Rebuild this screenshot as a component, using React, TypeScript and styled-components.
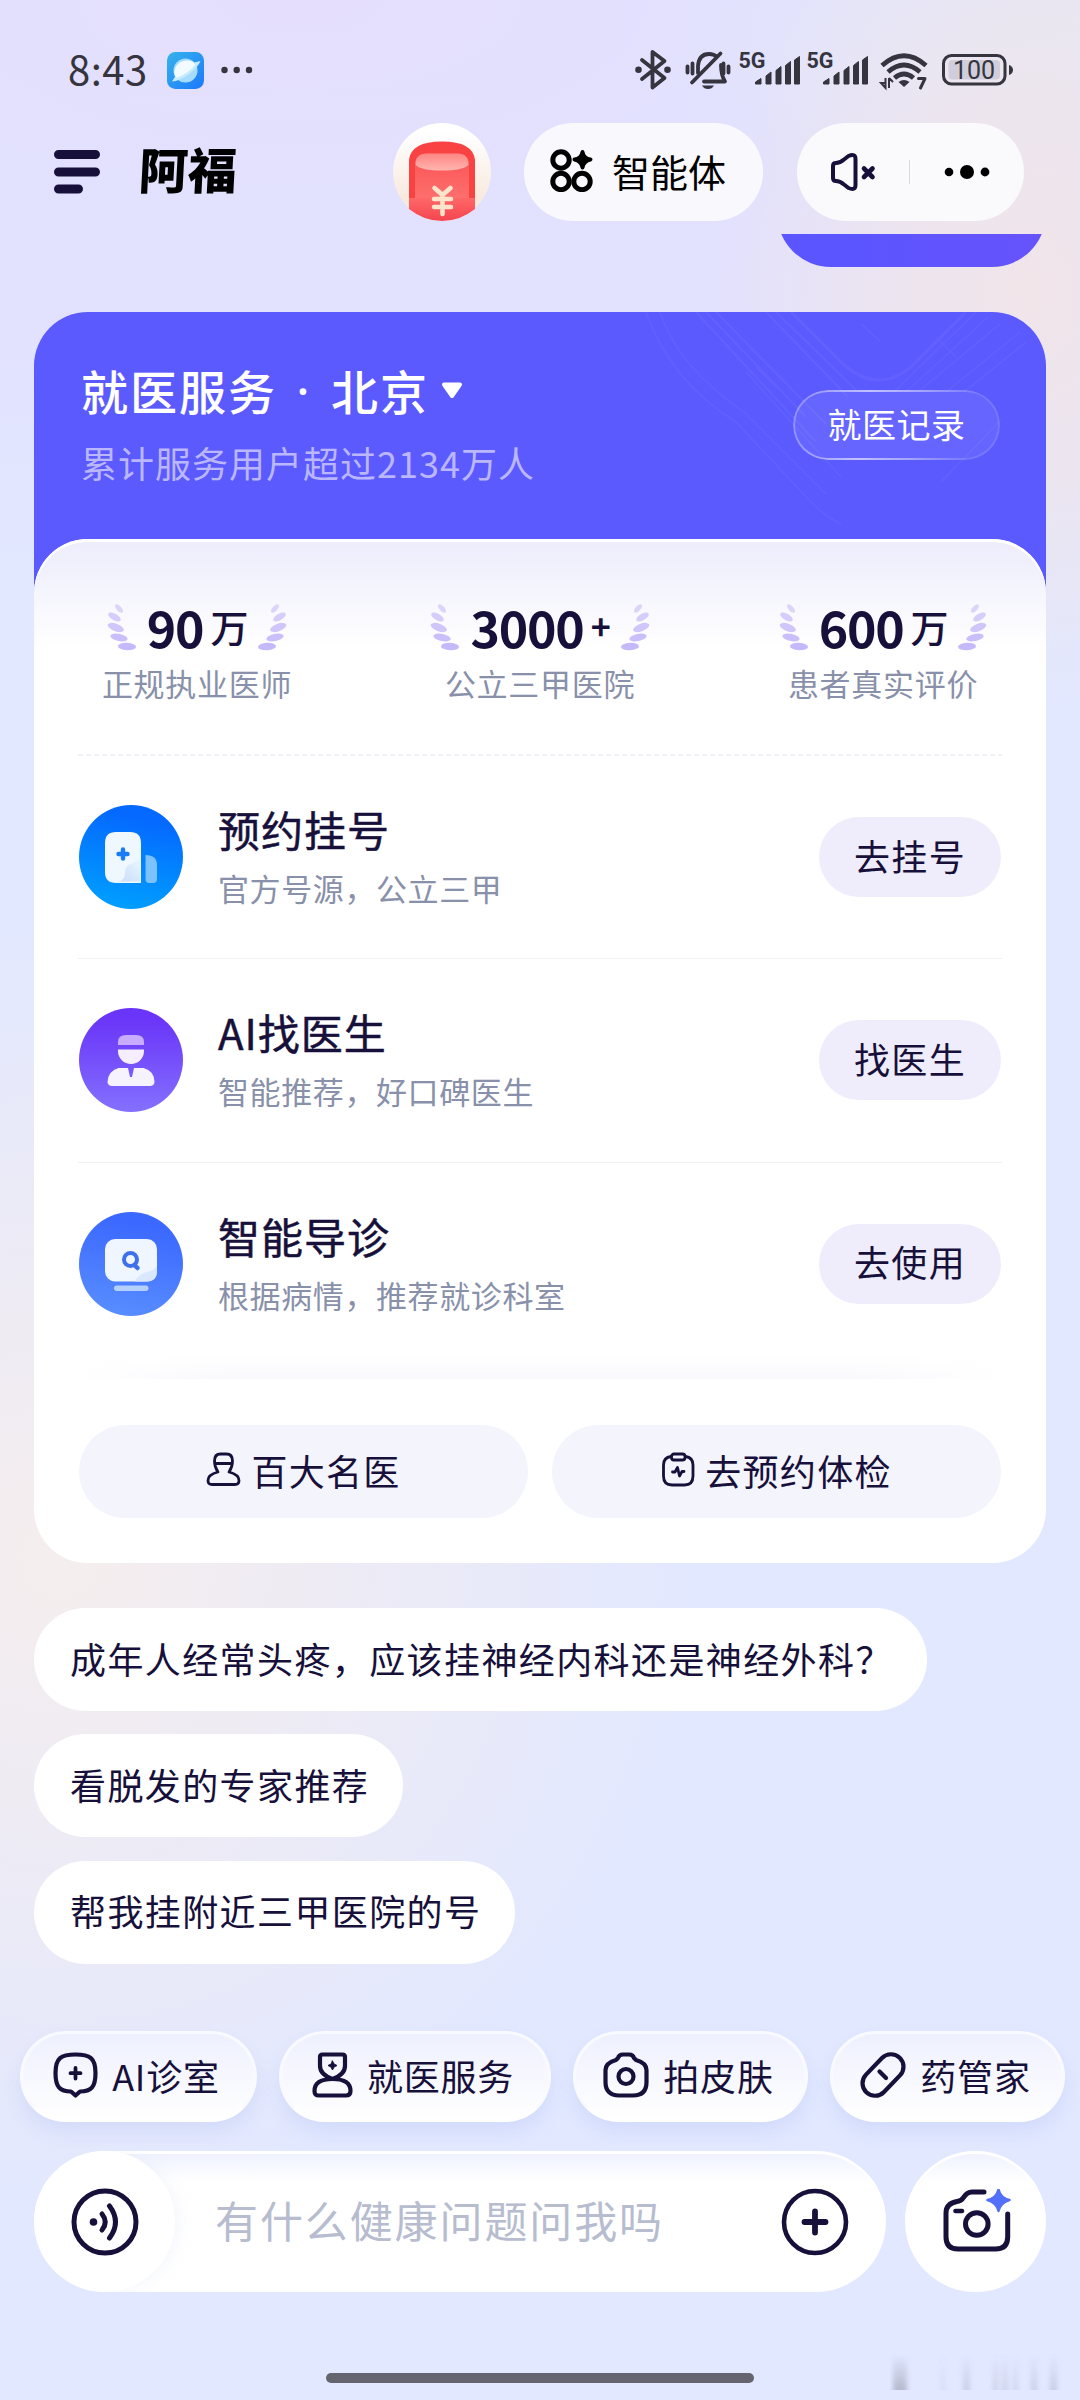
import React from "react";
import styled, { createGlobalStyle } from "styled-components";

const ink = "#17103a";
const muted = "#8990aa";

const GlobalStyle = createGlobalStyle`
  * { box-sizing: border-box; }
  body { margin: 0; background: #e2e7ff; }
  svg { display: block; flex: none; }
`;

const Screen = styled.main`
  width: 1080px;
  height: 2400px;
  overflow: hidden;
  display: flex;
  flex-direction: column;
  font-family: "Noto Sans CJK SC", "Noto Sans", sans-serif;
  color: ${ink};
  white-space: nowrap;
  background:
    radial-gradient(ellipse 320px 420px at 1030px 290px, #f1e5e9 0%, rgba(239, 229, 235, 0.75) 45%, rgba(239, 229, 235, 0) 100%),
    radial-gradient(ellipse 640px 640px at 60px 1560px, #f5eeee 0%, rgba(241, 236, 241, 0.8) 40%, rgba(236, 234, 245, 0) 100%),
    radial-gradient(ellipse 420px 200px at 1080px 40px, #e6e9f5 0%, rgba(230, 233, 245, 0) 100%),
    radial-gradient(ellipse 520px 220px at 300px 0, #e5dffd 0%, rgba(229, 223, 253, 0) 100%),
    linear-gradient(180deg, #e1e1ff 0, #e2e1fe 300px, #e2e8ff 560px, #e2e8ff 1900px, #e2e8ff 2400px);
`;

const StatusBar = styled.header`
  height: 123px;
  padding: 32px 65px 0 68px;
  display: flex;
  align-items: flex-start;
  justify-content: space-between;
  color: #35343f;
`;

const StatusLeft = styled.div`
  height: 76px;
  display: flex;
  align-items: center;
`;

const Clock = styled.span`
  width: 99px;
  padding-bottom: 4px;
  font-size: 40px;
  line-height: 72px;
  letter-spacing: 0.5px;
`;

const StatusIcons = styled.div`
  height: 76px;
  display: flex;
  align-items: center;
`;

const TopBar = styled.nav`
  height: 98px;
  padding: 0 56px 0 54px;
  display: flex;
  align-items: center;
`;

const Brand = styled.h1`
  margin: 0 0 0 38px;
  padding-bottom: 8px;
  width: 254px;
  font-size: 49px;
  font-weight: 800;
  line-height: 90px;
  color: #000;
  transform: skewX(-3deg);
`;

const AgentPill = styled.button`
  margin-left: 33px;
  width: 239px;
  height: 98px;
  padding: 0 0 3px 26px;
  border: 0;
  border-radius: 49px;
  background: #f9f9fd;
  display: flex;
  align-items: center;
  gap: 19px;
  font: inherit;
  font-size: 38px;
  color: #000;
`;

const ControlPill = styled.div`
  margin-left: 34px;
  width: 227px;
  height: 98px;
  padding: 0 34px 0 33px;
  border-radius: 49px;
  background: #faf9fc;
  display: flex;
  align-items: center;
  justify-content: space-between;
`;

const PillDivider = styled.i`
  width: 1px;
  height: 24px;
  margin-left: -2px;
  background: #d9d8e3;
`;

const Feed = styled.section`
  margin-top: 13px;
  height: 1797px;
  padding: 0 34px;
  overflow: hidden;
  display: flex;
  flex-direction: column;
  align-items: flex-start;
`;

const SentBubble = styled.div`
  flex: none;
  align-self: flex-end;
  width: 269px;
  height: 108px;
  margin-top: -75px;
  border-radius: 54px;
  background: linear-gradient(90deg, #5a55ff 20%, #6753fc 100%);
`;

const ServiceCard = styled.article`
  flex: none;
  width: 1012px;
  margin-top: 45px;
  border-radius: 54px;
  overflow: hidden;
  background: linear-gradient(180deg, #5b5aff 0 400px, #fff 400px);
`;

const CardHeader = styled.div`
  height: 227px;
  position: relative;
  padding: 0 46px 0 47px;
  display: flex;
  align-items: flex-start;
  justify-content: space-between;
`;

const Pattern = styled.svg`
  position: absolute;
  right: 0;
  top: 0;
`;

const HeaderText = styled.div`
  padding-top: 42px;
  display: flex;
  flex-direction: column;
`;

const CityTitle = styled.h2`
  margin: 0;
  height: 72px;
  display: flex;
  align-items: center;
  font-size: 47px;
  font-weight: 500;
  letter-spacing: 2px;
  line-height: 72px;
  color: #fff;
`;

const TitleDot = styled.span`
  width: 54px;
  text-align: center;
  font-family: "Noto Sans", sans-serif;
`;

const CityCaret = styled.svg`
  margin-left: 12px;
`;

const HeaderSub = styled.p`
  margin: 10px 0 0;
  font-size: 36px;
  line-height: 52px;
  letter-spacing: 1px;
  color: #bab6ff;
`;

const RecordButton = styled.button`
  position: relative;
  margin-top: 78px;
  width: 207px;
  height: 70px;
  padding: 0 0 3px;
  border: 0;
  border-radius: 35px;
  background: rgba(255, 255, 255, 0.07);
  font: inherit;
  font-size: 34px;
  letter-spacing: 0.5px;
  color: #fff;
  &::before {
    content: "";
    position: absolute;
    inset: 0;
    padding: 2px;
    border-radius: 35px;
    background: linear-gradient(100deg, rgba(255,255,255,0.25) 0%, rgba(255,255,255,0.6) 35%, rgba(255,255,255,0.4) 60%, rgba(255,255,255,0.12) 85%);
    mask: linear-gradient(#000 0 0) content-box exclude, linear-gradient(#000 0 0);
  }
`;

const CardBody = styled.div`
  height: 1024px;
  padding: 0 44px;
  border-radius: 54px;
  background: linear-gradient(180deg, #ececfc 0, #fff 110px);
  box-shadow: inset 0 3px 1px #fff;
`;

const Stats = styled.div`
  height: 215px;
  padding: 54px 23px 0;
  display: flex;
  justify-content: space-between;
`;

const Stat = styled.div`
  width: 192px;
  display: flex;
  flex-direction: column;
  align-items: center;
`;

const StatValue = styled.div`
  height: 66px;
  padding-top: 2px;
  display: flex;
  align-items: center;
  gap: 11px;
`;

const Figure = styled.strong`
  display: flex;
  align-items: center;
  padding-bottom: 2px;
  font-size: 50px;
  line-height: 64px;
  font-weight: 700;
  letter-spacing: -1.2px;
`;

const Unit = styled.span<{ $plus?: boolean }>`
  margin-left: 7px;
  font-size: ${(p) => (p.$plus ? 34 : 38)}px;
  line-height: 64px;
  font-weight: ${(p) => (p.$plus ? 700 : 500)};
`;

const StatLabel = styled.span`
  margin-top: 1px;
  font-size: 31px;
  line-height: 46px;
  letter-spacing: 0.7px;
  color: ${muted};
`;

const DashLine = styled.div`
  height: 2px;
  background: repeating-linear-gradient(90deg, #f0f0f5 0 5px, transparent 5px 8px);
`;

const ServiceRow = styled.div<{ $line: boolean }>`
  height: 203.3px;
  padding: 0 1px;
  display: flex;
  align-items: center;
  border-bottom: 1px solid ${(p) => (p.$line ? "#f0f0f5" : "transparent")};
`;

const RowText = styled.div`
  flex: 1;
  margin-left: 35px;
`;

const RowTitle = styled.h3`
  margin: 0;
  height: 62px;
  font-size: 42px;
  line-height: 54px;
  font-weight: 400;
  letter-spacing: 1px;
  -webkit-text-stroke: 0.5px ${ink};
`;

const RowSub = styled.p`
  margin: 0;
  font-size: 31px;
  line-height: 48px;
  letter-spacing: 0.6px;
  color: ${muted};
`;

const RowButton = styled.button`
  width: 182px;
  height: 80px;
  padding: 0 0 5px;
  border: 0;
  border-radius: 40px;
  background: #efedfb;
  font: inherit;
  font-size: 36px;
  letter-spacing: 1.3px;
  color: ${ink};
`;

const FadeLine = styled.div`
  height: 22px;
  margin-top: -9px;
  background: linear-gradient(90deg, #fff, rgba(255, 255, 255, 0) 18% 82%, #fff), linear-gradient(180deg, #fff, #f8f8fd);
`;

const QuickGrid = styled.div`
  margin-top: 46px;
  padding: 0 1px;
  display: grid;
  grid-template-columns: 1fr 1fr;
  gap: 24px;
`;

const QuickButton = styled.button`
  height: 93px;
  padding: 0 0 3px;
  border: 0;
  border-radius: 47px;
  background: #f4f4fd;
  display: flex;
  align-items: center;
  justify-content: center;
  gap: 10px;
  font: inherit;
  font-size: 36px;
  letter-spacing: 1.3px;
  color: ${ink};
`;

const Suggestions = styled.div`
  margin-top: 45px;
  display: flex;
  flex-direction: column;
  align-items: flex-start;
  gap: 23.3px;
`;

const Suggestion = styled.button`
  height: 103px;
  padding: 0 34px 4px 36px;
  border: 0;
  border-radius: 52px;
  background: #fff;
  font: inherit;
  font-size: 36px;
  letter-spacing: 1.4px;
  color: ${ink};
`;

const ChipRow = styled.div`
  padding-left: 20px;
  display: flex;
  gap: 22px;
`;

const Chip = styled.button<{ $w: number }>`
  flex: none;
  width: ${(p) => p.$w}px;
  height: 91px;
  padding: 0 4px 3px 0;
  border: 3px solid #f9faff;
  border-bottom-color: #fff;
  border-radius: 46px;
  background: linear-gradient(180deg, #eef0fe, #fff);
  box-shadow: 0 10px 18px rgba(150, 170, 235, 0.2);
  display: flex;
  align-items: center;
  justify-content: center;
  gap: 14px;
  font: inherit;
  font-size: 36px;
  letter-spacing: 0.8px;
  color: ${ink};
`;

const Composer = styled.footer`
  margin-top: 29px;
  padding: 0 34px;
  display: flex;
  gap: 19px;
`;

const InputPill = styled.div`
  width: 852px;
  height: 141px;
  padding-right: 37px;
  border-radius: 71px;
  overflow: hidden;
  background: linear-gradient(180deg, #edf1fe 0, #fff 30px);
  box-shadow: inset 0 3px 0 #fff;
  display: flex;
  align-items: center;
`;

const RoundButton = styled.button<{ $raised?: boolean }>`
  flex: none;
  width: 141px;
  height: 141px;
  padding: 0;
  border: 0;
  border-radius: 50%;
  display: grid;
  place-items: center;
  background: ${(p) => (p.$raised ? "#fff" : "linear-gradient(180deg, #edf1fe 0, #fff 30px)")};
  box-shadow: ${(p) => (p.$raised ? "6px 0 14px rgba(205, 212, 240, 0.17)" : "inset 0 3px 0 #fff")};
`;

const Placeholder = styled.span`
  flex: 1;
  padding: 0 0 6px 40px;
  font-size: 43px;
  letter-spacing: 1.9px;
  color: #b7bccf;
`;

const BottomEdge = styled.div`
  flex: 1;
  padding: 62px 18px 0 326px;
  display: flex;
  align-items: flex-start;
  justify-content: space-between;
`;

const HomeBar = styled.div`
  width: 428px;
  height: 10px;
  margin-top: 19px;
  border-radius: 5px;
  background: #65656f;
`;

const line = {
  fill: "none",
  stroke: "currentColor",
  strokeLinecap: "round" as const,
  strokeLinejoin: "round" as const,
};

const BrowserIcon = () => (
  <svg width="37" height="37" viewBox="0 0 37 37">
    <defs>
      <linearGradient id="planet" x1="0" y1="0" x2="1" y2="1">
        <stop offset="0" stopColor="#35b4ec" />
        <stop offset="1" stopColor="#1d78fb" />
      </linearGradient>
    </defs>
    <rect width="37" height="37" rx="8.5" fill="url(#planet)" />
    <circle cx="18.5" cy="18.5" r="12" fill="#a6dcfb" />
    <path d="M9 26.500A12 12 0 1 1 30 14.500Q24 22 9 26.500Z" fill="#f2fbff" />
    <path d="M27 10.500 33.500 9Q31 15.500 21.500 22.500 12 29 5 29.500L8.500 24 9.500 26Q22 21 28.500 12.500Z" fill="#c6ebfd" />
  </svg>
);

const DotsSvg = styled.svg`
  margin-left: 17px;
`;

const MoreDots = () => (
  <DotsSvg width="32" height="8" viewBox="0 0 32 8">
    <circle cx="3.500" cy="4" r="3.200" fill="#35343f" />
    <circle cx="15.700" cy="4" r="3.200" fill="#35343f" />
    <circle cx="28" cy="4" r="3.200" fill="#35343f" />
  </DotsSvg>
);

const StatusGlyphs = () => (
  <svg width="380" height="44" viewBox="635 48 380 44" color="#35343f">
    <g {...line} strokeWidth="3.800">
      <path d="M642 60 664.500 78 652.500 87.500V52L664.500 61 642 79" />
    </g>
    <circle cx="638.500" cy="69.700" r="3.300" fill="currentColor" />
    <circle cx="667.500" cy="69.700" r="3.300" fill="currentColor" />
    <g {...line} strokeWidth="3.800">
      <path d="M698 73V66Q699 54 709 54 714 54 717 57M721 65Q721 75 725 81.500H704M720.500 53.500 692 82.500M692.500 63.500V73.500M687.500 66.500V72.500M723.500 63.500V73.500M728.500 66.500V72.500" />
    </g>
    <path d="M702 85.500H714Q712 89 708 89T702 85.500Z" fill="currentColor" />
    {[0, 68].map((dx) => (
      <g key={dx} transform={`translate(${dx} 0)`} fill="currentColor">
        <text x="738.500" y="68" fontFamily="Roboto, sans-serif" fontSize="21.500" fontWeight="700">5G</text>
        <path d="M755.500 84V82L761 78.500V84ZM766 84V76L771 72V84ZM776 84V70.500L781 66.500V84ZM785.500 84V65.500L790.500 61.500V84ZM794.500 84V60L799.500 56.500V84Z" stroke="currentColor" strokeWidth="1" strokeLinejoin="round" />
      </g>
    ))}
    <g fill="none" stroke="currentColor" strokeWidth="4.800">
      <path d="M882 65.500Q904 46 926 65.500" />
      <path d="M888 72Q904 58 920 72" />
      <path d="M894.500 78Q904 70 913.500 78" />
    </g>
    <path d="M898.500 82Q904 78 909.500 82L904 87Z" fill="currentColor" />
    <path d="M881 83H885.500V88ZM889 83V78M885.500 88V78M889 78 893 82M889 78V88" fill="none" stroke="currentColor" strokeWidth="2" />
    <path d="M918.500 78.500H925L920.500 88" {...line} strokeWidth="3" />
    <rect x="943.500" y="55.500" width="61.500" height="28.500" rx="8" fill="none" stroke="currentColor" strokeWidth="3" />
    <rect x="948.500" y="60" width="51.500" height="19.500" rx="4" fill="#cfceda" />
    <path d="M1009.500 65.500Q1012.500 66.500 1012.500 70T1009.500 74.500Z" fill="currentColor" stroke="currentColor" />
    <text x="974" y="78.500" textAnchor="middle" fontFamily="Roboto, sans-serif" fontSize="25" fontWeight="400" fill="currentColor">100</text>
  </svg>
);

const MenuIcon = () => (
  <svg width="47" height="44" viewBox="0 0 47 44" {...line} strokeWidth="9" color={ink}>
    <path d="M4.500 4.500H41.500M4.500 22H41.500M4.500 39H24.500" />
  </svg>
);

const RedPacket = () => (
  <svg width="98" height="98" viewBox="0 0 98 98">
    <defs>
      <linearGradient id="disc" x1="0" y1="0" x2="0" y2="1">
        <stop offset="0.1" stopColor="#fff" />
        <stop offset="0.75" stopColor="#f8eadf" />
      </linearGradient>
      <linearGradient id="packet" x1="0" y1="0" x2="0" y2="1">
        <stop offset="0" stopColor="#fb5252" />
        <stop offset="1" stopColor="#fd7170" />
      </linearGradient>
      <linearGradient id="flap" x1="0" y1="0" x2="0" y2="1">
        <stop offset="0" stopColor="#ff8583" />
        <stop offset="1" stopColor="#ffb5b0" />
      </linearGradient>
      <linearGradient id="pouch" x1="0" y1="0" x2="0" y2="1">
        <stop offset="0" stopColor="#ff6867" />
        <stop offset="1" stopColor="#f54450" />
      </linearGradient>
    </defs>
    <circle cx="49" cy="49" r="49" fill="url(#disc)" />
    <path d="M16 37Q18 18.500 49 18.500T82 37V78H16Z" fill="#f94343" />
    <path d="M22 42Q22 30.500 34 30.500H64Q76 30.500 76 42V78H22Z" fill="url(#packet)" />
    <path d="M22.500 42Q22 30.500 34 30.500H64Q76 30.500 75.500 42 70 47.500 49 47.500T22.500 42Z" fill="url(#flap)" />
    <path d="M16 75H82V86Q67 98 49 98T16 86Z" fill="url(#pouch)" />
    <path d="M41.500 65 49.500 72 57.500 65M49.500 72V91M41 76H58M41 84H58" {...line} strokeWidth="4.600" color="#ffe4cc" />
  </svg>
);

const AgentsIcon = () => (
  <svg width="43" height="43" viewBox="0 0 43 43">
    <g fill="none" stroke="#000" strokeWidth="5">
      <circle cx="11" cy="11" r="8.200" />
      <circle cx="11" cy="32.500" r="8.200" />
      <circle cx="32" cy="32.500" r="8.200" />
    </g>
    <path d="M32.500 3Q33.500 9.500 40.500 10.500 33.500 12 32.500 18.500 31.500 12 24.500 10.500 31.500 9.500 32.500 3Z" stroke="#000" strokeWidth="4" strokeLinejoin="round" />
  </svg>
);

const MuteIcon = () => (
  <svg width="47" height="40" viewBox="0 0 47 40" {...line} color={ink}>
    <path d="M3 14Q3 11 6 11 10 11 14 7.500L18.500 4Q25.500 1 25.500 7V33Q25.500 39 18.500 36L14 32.500Q10 29 6 29 3 29 3 26Z" strokeWidth="4" />
    <path d="M34 16.500 42.500 25M42.500 16.500 34 25" strokeWidth="4.600" />
  </svg>
);

const CapsuleDots = () => (
  <svg width="46" height="16" viewBox="0 0 46 16">
    <circle cx="5" cy="8" r="4.300" />
    <circle cx="23" cy="8" r="7" />
    <circle cx="41" cy="8" r="4.400" />
  </svg>
);

const Laurel = ({ flip = false }: { flip?: boolean }) => (
  <svg width="29" height="47" viewBox="0 0 29 47">
    <g transform={flip ? "translate(29 0) scale(-1 1)" : undefined}>
      <ellipse cx="12" cy="4.500" rx="5.200" ry="2.500" transform="rotate(48 12 4.500)" fill="#ddd5f9" />
      <ellipse cx="7.500" cy="13" rx="7" ry="3.300" transform="rotate(30 7.500 13)" fill="#d6cdfa" />
      <ellipse cx="8.800" cy="23.500" rx="8.600" ry="3.700" transform="rotate(21 8.800 23.500)" fill="#d0c6fa" />
      <ellipse cx="12" cy="33.500" rx="8.800" ry="3.600" transform="rotate(12 12 33.500)" fill="#cabffb" />
      <ellipse cx="20" cy="42.500" rx="9" ry="3.800" transform="rotate(3 20 42.500)" fill="#c5b9fb" />
    </g>
  </svg>
);

const HospitalIcon = () => (
  <svg width="104" height="104" viewBox="0 0 104 104">
    <defs>
      <linearGradient id="hosp" x1="0.6" y1="0" x2="0.4" y2="1">
        <stop offset="0.1" stopColor="#0568ff" />
        <stop offset="1" stopColor="#009fff" />
      </linearGradient>
      <linearGradient id="fold" x1="0" y1="1" x2="1" y2="0">
        <stop offset="0" stopColor="#c4dcfa" />
        <stop offset="1" stopColor="#ecf5ff" />
      </linearGradient>
    </defs>
    <circle cx="52" cy="52" r="52" fill="url(#hosp)" />
    <path d="M26 38Q26 27 37 27H51Q62 27 62 38V78H37Q26 78 26 67Z" fill="#eff7ff" />
    <path d="M46 68Q46 60 52 59L61 54V76.500H37Q46 77 46 68Z" fill="url(#fold)" />
    <path d="M66.500 50Q78 50 78 60V74Q78 78 74 78H70Q66.500 78 66.500 74Z" fill="#7cc2ff" />
    <path d="M44 44.500V53.500M39.500 49H48.500" {...line} strokeWidth="4.400" color="#177cf5" />
  </svg>
);

const DoctorIcon = () => (
  <svg width="104" height="104" viewBox="0 0 104 104">
    <defs>
      <linearGradient id="doc" x1="0.5" y1="0" x2="0.5" y2="1">
        <stop offset="0.1" stopColor="#6a35f8" />
        <stop offset="1" stopColor="#8470ff" />
      </linearGradient>
    </defs>
    <circle cx="52" cy="52" r="52" fill="url(#doc)" />
    <path d="M39 37V34Q39 27 47 27H57Q65 27 65 34V37Z" fill="#c8acff" />
    <path d="M39 41.500H65V43A13 13 0 0 1 39 43Z" fill="#f4eefe" />
    <path d="M39.500 60H49L51 69H53L55 60H64.500Q75.500 63 75.500 74 75 78 71 78H33Q29 78 28.500 74 29 63 39.500 60Z" fill="#f7f3fe" />
  </svg>
);

const TriageIcon = () => (
  <svg width="104" height="104" viewBox="0 0 104 104">
    <defs>
      <linearGradient id="tri" x1="0.6" y1="0" x2="0.4" y2="1">
        <stop offset="0.1" stopColor="#3b68ff" />
        <stop offset="1" stopColor="#588dff" />
      </linearGradient>
    </defs>
    <circle cx="52" cy="52" r="52" fill="url(#tri)" />
    <rect x="26" y="27" width="52" height="42.500" rx="10" fill="#eff6ff" />
    <path d="M56 69.500Q59 62 68 60 76 58 78 54V59.500Q78 69.500 68 69.500Z" fill="#d9e8fe" />
    <rect x="35" y="73.500" width="34.500" height="5.500" rx="2.700" fill="#b3d0ff" />
    <circle cx="51.500" cy="47.500" r="6.500" fill="none" stroke="#3f70ec" strokeWidth="4" />
    <path d="M55.500 53 58.500 56" {...line} strokeWidth="4.500" color="#3f70ec" />
  </svg>
);

const FamousDoctorIcon = () => (
  <svg width="35" height="35" viewBox="0 0 35 35" {...line} strokeWidth="2.800" color={ink}>
    <path d="M8.500 9Q8.500 2 14.500 2H20.500Q26.500 2 26.500 9 26.500 15 23 20 33 22.500 33 28.500 33 32.500 29 32.500H6Q2 32.500 2 28.500 2 22.500 12 20 8.500 15 8.500 9ZM9 11.500H26" />
  </svg>
);

const CheckupIcon = () => (
  <svg width="34" height="35" viewBox="0 0 34 35" {...line} strokeWidth="2.800" color={ink}>
    <path d="M10 4.500Q2.500 5.500 2.500 13V24Q2.500 33 11 33H23.500Q32 33 32 24V13Q32 5.500 24.500 4.500" />
    <rect x="10.500" y="2" width="13.500" height="6" rx="2.500" />
    <path d="M11.500 20H14L16.500 15.500 18.500 24 21 19.500H23" />
  </svg>
);

const ClinicIcon = () => (
  <svg width="45" height="46" viewBox="0 0 45 46" {...line} strokeWidth="4.200" color={ink}>
    <path d="M22.500 2.500C37 2.500 42.500 6 42.500 21 42.500 35.500 38 39.500 27 39.500L22.500 43.500 18 39.500C7 39.500 2.500 35.500 2.500 21 2.500 6 8 2.500 22.500 2.500Z" />
    <path d="M22.500 16V26.500M17.500 21.200H27.500" strokeWidth="3.800" />
  </svg>
);

const ServiceIcon = () => (
  <svg width="41" height="46" viewBox="0 0 41 46" {...line} strokeWidth="4.200" color={ink}>
    <path d="M10.500 2.500H30.500Q33 2.500 33 5V14Q33 22 26 27 15 27 14.500 27 8 22 8 14V5Q8 2.500 10.500 2.500Z" stroke="none" />
    <path d="M20.500 27Q8 22.500 8 14V5Q8 2.500 10.500 2.500H30.500Q33 2.500 33 5V14Q33 22.500 20.500 27Z" />
    <path d="M20.500 27Q38.500 27 38.500 39 38.500 43.500 34 43.500H7Q2.500 43.500 2.500 39 2.500 27 20.500 27Z" />
    <path d="M20.500 9 22 12 25 13.500 22 15 20.500 18 19 15 16 13.500 19 12Z" fill="currentColor" strokeWidth="1" />
  </svg>
);

const SkinIcon = () => (
  <svg width="46" height="46" viewBox="0 0 46 46" {...line} strokeWidth="4.200" color={ink}>
    <path d="M15 6Q16 2.500 20 2.500H26Q30 2.500 31 6L33 8Q43.500 11 43.500 18V30Q43.500 43.500 30 43.500H16Q2.500 43.500 2.500 30V18Q2.500 11 13 8Z" />
    <circle cx="23" cy="24.500" r="7.500" />
  </svg>
);

const PillIcon = () => (
  <svg width="46" height="46" viewBox="0 0 46 46" {...line} strokeWidth="4.200" color={ink}>
    <rect x="-1" y="10.500" width="48" height="25" rx="12.500" transform="rotate(-46 23 23)" />
    <path d="M19.500 19.500 26 26" />
  </svg>
);

const VoiceIcon = () => (
  <svg width="68" height="68" viewBox="0 0 68 68" {...line} color={ink}>
    <circle cx="34" cy="34" r="31" strokeWidth="5" />
    <circle cx="22.500" cy="34" r="3.800" fill="currentColor" stroke="none" />
    <path d="M31 26Q37.500 34 31 42M38.500 18Q50.500 34 38.500 50" strokeWidth="5" />
  </svg>
);

const PlusIcon = () => (
  <svg width="68" height="68" viewBox="0 0 68 68" {...line} color={ink}>
    <circle cx="34" cy="34" r="31" strokeWidth="4.600" />
    <path d="M34 23.500V44.500M23.500 34H44.500" strokeWidth="5.800" />
  </svg>
);

const SmartCameraIcon = () => (
  <svg width="70" height="66" viewBox="0 0 70 66" {...line} strokeWidth="5" color={ink}>
    <path d="M43 3H31Q26 3 22.500 8.500 20 12.500 16 12.500 5 14.500 5 24V48Q5 60 17 60H54.500Q66.700 60 66.700 48V25" />
    <path d="M14.500 22H21" strokeWidth="4.600" />
    <circle cx="35.800" cy="35" r="11.300" />
    <path d="M57.500 0.500Q59.500 9 68.500 11 59.500 13.500 57.500 22 55.500 13.500 46.500 11 55.500 9 57.500 0.500Z" fill="#5570f8" stroke="#5570f8" strokeWidth="2.500" overflow="visible" />
  </svg>
);

const Watermark = () => (
  <svg width="172" height="40" viewBox="0 0 172 40">
    <defs>
      <linearGradient id="mark" x1="0" y1="0" x2="0" y2="1">
        <stop offset="0" stopColor="#777b8a" stopOpacity="0" />
        <stop offset="1" stopColor="#777b8a" stopOpacity="0.42" />
      </linearGradient>
      <filter id="soft" x="-5%" y="-5%" width="110%" height="110%">
        <feGaussianBlur stdDeviation="2.400 0.300" />
      </filter>
    </defs>
    <g fill="url(#mark)" filter="url(#soft)">
      <rect x="3" y="0" width="14" height="36" />
      <rect x="51" y="0" width="4" height="36" opacity="0.300" />
      <rect x="73" y="0" width="7" height="36" opacity="0.550" />
      <rect x="103" y="0" width="5" height="36" opacity="0.500" />
      <rect x="112" y="0" width="6" height="36" opacity="0.450" />
      <rect x="123" y="0" width="5" height="36" opacity="0.400" />
      <rect x="141" y="0" width="6" height="36" opacity="0.550" />
      <rect x="160" y="0" width="7" height="36" opacity="0.600" />
    </g>
  </svg>
);

const HeaderPattern = () => (
  <Pattern width="420" height="226" viewBox="0 0 420 226">
    <g fill="none" stroke="#8f90ff" strokeWidth="1.500" opacity="0.140">
      <path d="M20 0Q45 70 110 110L185 190Q200 205 215 212M34 0Q52 55 118 100L200 182" />
      <path d="M70 0 190 130M80 0 180 105M90 0 200 112M140 0 222 85M150 0 230 78" strokeWidth="2" />
      <path d="M165 0 217 52Q255 85 290 50L340 0" strokeWidth="3" />
      <path d="M268 80 350 0M280 80 362 5M292 80 374 12M320 80 394 20M338 80 400 30M315 170 375 108" />
      <path d="M120 60 215 165M130 55 150 75M255 30 235 12M310 25 330 45" />
    </g>
  </Pattern>
);

const stats = [
  { value: "90", unit: "万", label: "正规执业医师" },
  { value: "3000", unit: "+", label: "公立三甲医院" },
  { value: "600", unit: "万", label: "患者真实评价" },
];

const services = [
  { icon: <HospitalIcon />, title: "预约挂号", sub: "官方号源，公立三甲", action: "去挂号" },
  { icon: <DoctorIcon />, title: "AI找医生", sub: "智能推荐，好口碑医生", action: "找医生" },
  { icon: <TriageIcon />, title: "智能导诊", sub: "根据病情，推荐就诊科室", action: "去使用" },
];

const questions = [
  "成年人经常头疼，应该挂神经内科还是神经外科？",
  "看脱发的专家推荐",
  "帮我挂附近三甲医院的号",
];

const chips = [
  { icon: <ClinicIcon />, label: "AI诊室", width: 237 },
  { icon: <ServiceIcon />, label: "就医服务", width: 272 },
  { icon: <SkinIcon />, label: "拍皮肤", width: 235 },
  { icon: <PillIcon />, label: "药管家", width: 235 },
];

export default function App() {
  return (
    <>
      <GlobalStyle />
      <Screen>
        <StatusBar>
          <StatusLeft>
            <Clock>8:43</Clock>
            <BrowserIcon />
            <MoreDots />
          </StatusLeft>
          <StatusIcons>
            <StatusGlyphs />
          </StatusIcons>
        </StatusBar>
        <TopBar>
          <MenuIcon />
          <Brand>阿福</Brand>
          <RedPacket />
          <AgentPill>
            <AgentsIcon />
            智能体
          </AgentPill>
          <ControlPill>
            <MuteIcon />
            <PillDivider />
            <CapsuleDots />
          </ControlPill>
        </TopBar>
        <Feed>
          <SentBubble />
          <ServiceCard>
            <CardHeader>
              <HeaderPattern />
              <HeaderText>
                <CityTitle>
                  <span>就医服务</span>
                  <TitleDot>·</TitleDot>
                  <span>北京</span>
                  <CityCaret width="22" height="17" viewBox="0 0 22 17">
                    <path d="M3 2.500H19L11 14Z" fill="#fff" stroke="#fff" strokeWidth="4" strokeLinejoin="round" />
                  </CityCaret>
                </CityTitle>
                <HeaderSub>累计服务用户超过2134万人</HeaderSub>
              </HeaderText>
              <RecordButton>就医记录</RecordButton>
            </CardHeader>
            <CardBody>
              <Stats>
                {stats.map((s) => (
                  <Stat key={s.label}>
                    <StatValue>
                      <Laurel />
                      <Figure>
                        {s.value}
                        <Unit $plus={s.unit === "+"}>{s.unit}</Unit>
                      </Figure>
                      <Laurel flip />
                    </StatValue>
                    <StatLabel>{s.label}</StatLabel>
                  </Stat>
                ))}
              </Stats>
              <DashLine />
              {services.map((s, i) => (
                <ServiceRow key={s.title} $line={i < 2}>
                  {s.icon}
                  <RowText>
                    <RowTitle>{s.title}</RowTitle>
                    <RowSub>{s.sub}</RowSub>
                  </RowText>
                  <RowButton>{s.action}</RowButton>
                </ServiceRow>
              ))}
              <FadeLine />
              <QuickGrid>
                <QuickButton>
                  <FamousDoctorIcon />
                  百大名医
                </QuickButton>
                <QuickButton>
                  <CheckupIcon />
                  去预约体检
                </QuickButton>
              </QuickGrid>
            </CardBody>
          </ServiceCard>
          <Suggestions>
            {questions.map((q) => (
              <Suggestion key={q}>{q}</Suggestion>
            ))}
          </Suggestions>
        </Feed>
        <ChipRow>
          {chips.map((c) => (
            <Chip key={c.label} $w={c.width}>
              {c.icon}
              {c.label}
            </Chip>
          ))}
        </ChipRow>
        <Composer>
          <InputPill>
            <RoundButton $raised>
              <VoiceIcon />
            </RoundButton>
            <Placeholder>有什么健康问题问我吗</Placeholder>
            <PlusIcon />
          </InputPill>
          <RoundButton>
            <SmartCameraIcon />
          </RoundButton>
        </Composer>
        <BottomEdge>
          <HomeBar />
          <Watermark />
        </BottomEdge>
      </Screen>
    </>
  );
}
